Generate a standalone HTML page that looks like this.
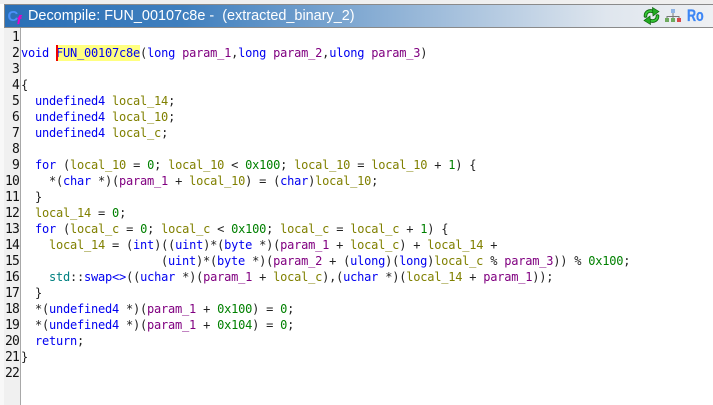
<!DOCTYPE html>
<html><head><meta charset="utf-8"><style>
html,body{margin:0;padding:0;background:#fff}
#r{position:relative;width:713px;height:405px;overflow:hidden;background:#fff}
#tb{position:absolute;left:4px;top:4px;width:709px;height:24px;box-sizing:border-box;border:1px solid #8a8a8a;border-right:0;background:linear-gradient(90deg,#2a6fb6 0%,#3f7fbe 25%,#8fb2d6 55%,#dfe6ee 85%,#eef0f3 100%)}
#top{position:absolute;left:0;top:0;width:713px;height:4px;background:#efefef}
#tl{position:absolute;left:28px;top:7px;font:14.45px/19px "Liberation Sans",sans-serif;color:#fff;white-space:pre}
#g{position:absolute;left:4px;top:28px;width:16px;height:377px;background:#f0f0f0;border-right:1px solid #a8a8a8}
#lf{position:absolute;left:0;top:28px;width:4px;height:377px;background:#f8f8f8}
#n,#c{position:absolute;top:29px;font:12px/16px "DejaVu Sans Mono",monospace;letter-spacing:-0.224px;white-space:pre;margin:0}
#n{left:0;top:30px;width:19px;text-align:right;color:#111;font-size:13px;letter-spacing:-0.83px}
#c{left:21px;color:#222}
.k{color:#0000f0}.p{color:#800080}.l{color:#808000}.d{color:#008000}.f{color:#0000f0}.s{color:#008080}
#cur{position:absolute;left:56px;top:45px;width:2px;height:16px;background:#f00000}
#hl{position:absolute;left:56px;top:45px;width:84px;height:16px;background:#ffff80}
</style></head><body><div id="r">
<div id="top"></div><div id="tb"></div>
<svg style="position:absolute;left:6px;top:5px" width="20" height="22" viewBox="0 0 20 22"><text x="1.500" y="16" font-family="Liberation Sans" font-weight="700" font-size="15" fill="#4a90f8">C</text><text x="11" y="19" font-family="Liberation Sans" font-style="italic" font-weight="700" font-size="12" fill="#e800c8" stroke="#e800c8" stroke-width=".3">f</text></svg>
<div id="tl">Decompile: FUN_00107c8e -  (extracted_binary_2)</div>
<svg style="position:absolute;left:643px;top:7px" width="17" height="18" viewBox="0 0 17 18"><g fill="none" stroke-linecap="round"><path d="M2.500 9C2.500 5 6 3 10 4.500" stroke="#0b640b" stroke-width="3.600"/><path d="M14.500 9C14.500 13 11 15 7 13.500" stroke="#0b640b" stroke-width="3.600"/><path d="M2.500 9C2.500 5 6 3 10 4.500" stroke="#37c837" stroke-width="1.800"/><path d="M14.500 9C14.500 13 11 15 7 13.500" stroke="#37c837" stroke-width="1.800"/></g><path d="M9.500 .5L16 4.500L10 9Z" fill="#22aa22" stroke="#0b640b" stroke-width=".7"/><path d="M7.500 17.500L1 13.500L7 9Z" fill="#22aa22" stroke="#0b640b" stroke-width=".7"/></svg>
<svg style="position:absolute;left:664px;top:8px" width="18" height="15" viewBox="0 0 18 15"><path d="M9 4V8.500M3 10V8.500H15V10M9 8.500V10" stroke="#777" fill="none"/><rect x="7" y="1" width="4" height="4" fill="#8fb4e4"/><rect x="1" y="10" width="4" height="4" fill="#6eaa5e"/><rect x="7" y="10" width="4" height="4" fill="#6eaa5e"/><rect x="13" y="10" width="4" height="4" fill="#d84848"/></svg>
<div style="position:absolute;left:687px;top:6px;font:700 16.5px/20px 'Liberation Sans',sans-serif;color:#3d86f5;-webkit-text-stroke:.3px #3d86f5;transform:scaleX(.76);transform-origin:left top;white-space:pre">Ro</div>
<div id="lf"></div><div id="g"></div>
<pre id="n"> 1
 2
 3
 4
 5
 6
 7
 8
 9
10
11
12
13
14
15
16
17
18
19
20
21
22</pre>
<div id="hl"></div>
<pre id="c">

<span class="k">void</span> <span class="f">FUN_00107c8e</span>(<span class="k">long</span> <span class="p">param_1</span>,<span class="k">long</span> <span class="p">param_2</span>,<span class="k">ulong</span> <span class="p">param_3</span>)

{
  <span class="k">undefined4</span> <span class="l">local_14</span>;
  <span class="k">undefined4</span> <span class="l">local_10</span>;
  <span class="k">undefined4</span> <span class="l">local_c</span>;

  <span class="k">for</span> (<span class="l">local_10</span> = <span class="d">0</span>; <span class="l">local_10</span> &lt; <span class="d">0x100</span>; <span class="l">local_10</span> = <span class="l">local_10</span> + <span class="d">1</span>) {
    *(<span class="k">char</span> *)(<span class="p">param_1</span> + <span class="l">local_10</span>) = (<span class="k">char</span>)<span class="l">local_10</span>;
  }
  <span class="l">local_14</span> = <span class="d">0</span>;
  <span class="k">for</span> (<span class="l">local_c</span> = <span class="d">0</span>; <span class="l">local_c</span> &lt; <span class="d">0x100</span>; <span class="l">local_c</span> = <span class="l">local_c</span> + <span class="d">1</span>) {
    <span class="l">local_14</span> = (<span class="k">int</span>)((<span class="k">uint</span>)*(<span class="k">byte</span> *)(<span class="p">param_1</span> + <span class="l">local_c</span>) + <span class="l">local_14</span> +
                    (<span class="k">uint</span>)*(<span class="k">byte</span> *)(<span class="p">param_2</span> + (<span class="k">ulong</span>)(<span class="k">long</span>)<span class="l">local_c</span> % <span class="p">param_3</span>)) % <span class="d">0x100</span>;
    <span class="s">std</span>::<span class="f">swap&lt;&gt;</span>((<span class="k">uchar</span> *)(<span class="p">param_1</span> + <span class="l">local_c</span>),(<span class="k">uchar</span> *)(<span class="l">local_14</span> + <span class="p">param_1</span>));
  }
  *(<span class="k">undefined4</span> *)(<span class="p">param_1</span> + <span class="d">0x100</span>) = <span class="d">0</span>;
  *(<span class="k">undefined4</span> *)(<span class="p">param_1</span> + <span class="d">0x104</span>) = <span class="d">0</span>;
  <span class="k">return</span>;
}
</pre>
<div id="cur"></div>
</div></body></html>
